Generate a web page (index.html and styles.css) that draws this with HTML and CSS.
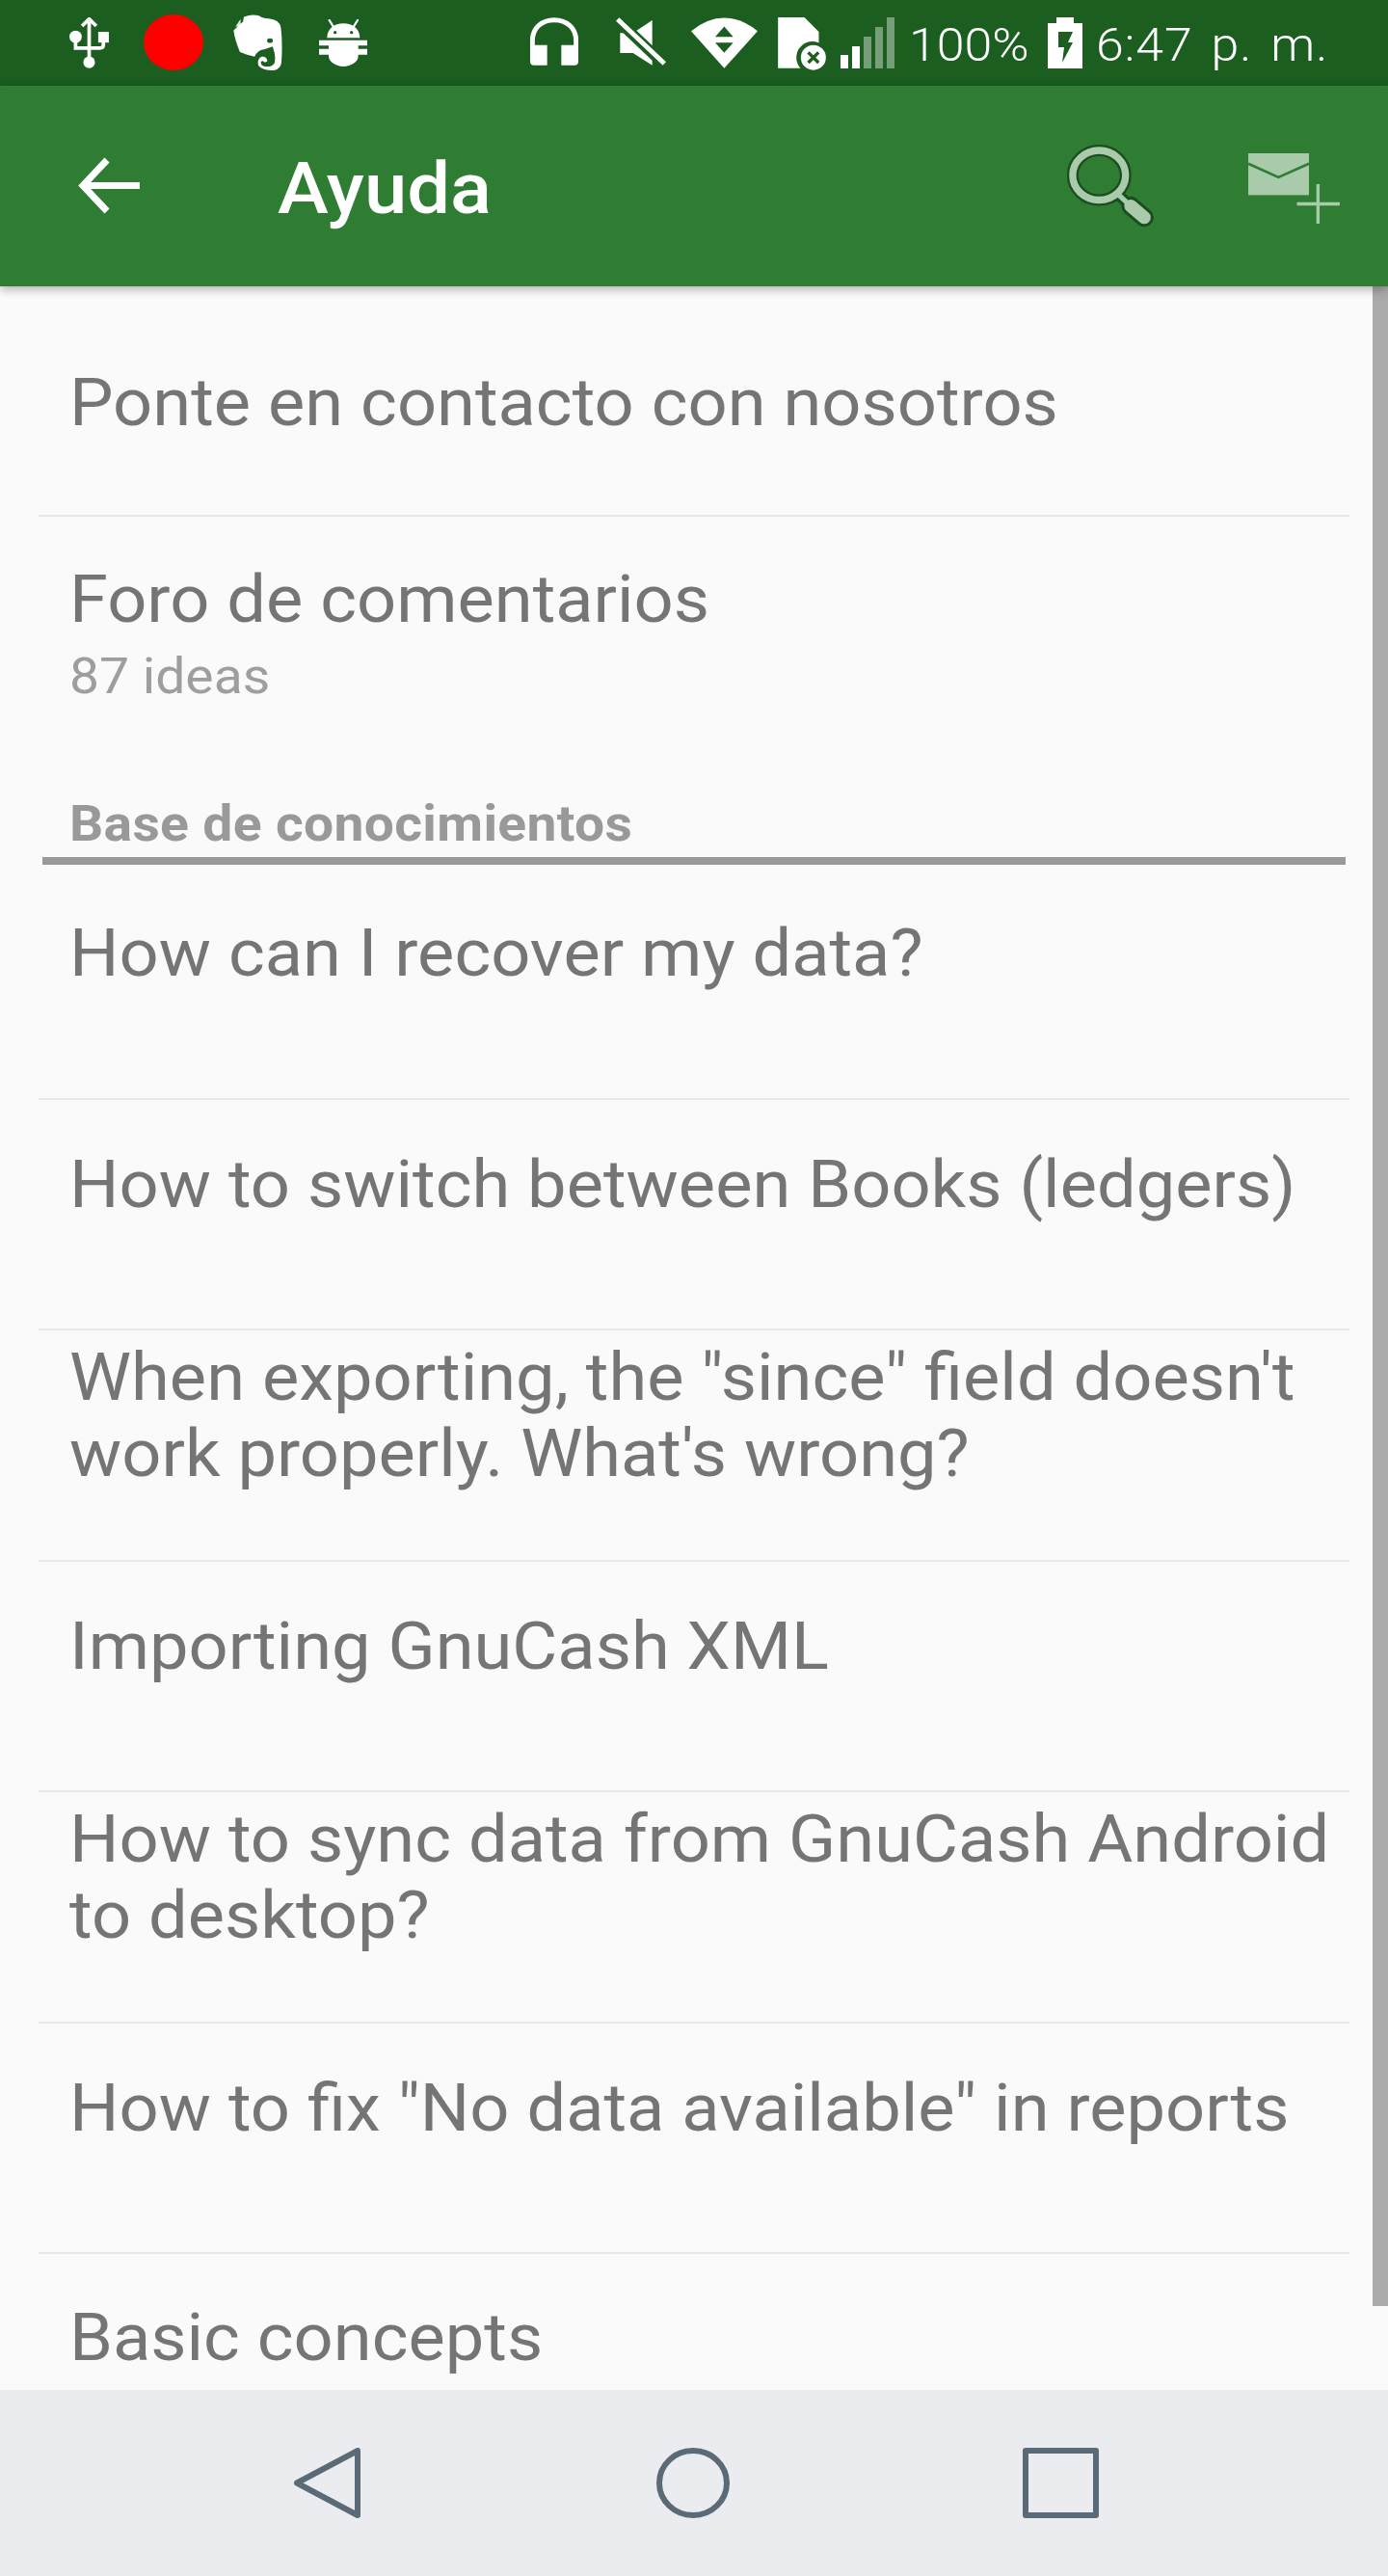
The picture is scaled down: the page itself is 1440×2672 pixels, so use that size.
FILE: index.html
```html
<!DOCTYPE html>
<html lang="es">
<head>
  <meta charset="UTF-8" />
  <meta name="viewport" content="width=device-width, initial-scale=1.0" />
  <title>Ayuda</title>
  <link rel="stylesheet" href="styles.css">
</head>
<body>
  <div class="phone">
    <div class="status-bar">
      <svg class="ic ic-usb" viewBox="36 40 122 158">
        <path d="M97 50V178M75 67L97 45L119 67" class="usb-line" />
        <path d="M55 100V135H97M141 100V125Q141 135 130 135H97" class="usb-line" />
        <circle cx="97" cy="179" r="18" fill="#fff" />
        <circle cx="55" cy="100" r="19" fill="#fff" />
        <rect x="125" y="85" width="33" height="33" fill="#fff" />
      </svg>
      <div class="rec-dot"></div>
      <svg class="ic ic-evernote" viewBox="0 0 152 175">
        <path fill="#fff" fill-rule="evenodd" d="M0 50L30 22L32 8Q55 -3 80 4Q88 12 110 13Q143 16 148 40Q154 85 150 150Q147 172 125 175Q90 176 78 160Q72 140 88 132Q104 130 106 146L98 150Q92 142 86 148Q84 158 95 162Q120 166 128 152Q134 128 122 100Q100 108 85 112Q72 118 66 132Q45 128 20 118Q4 80 0 50ZM105 82a9 7 0 1 0 18 0a9 7 0 1 0 -18 0Z" />
        <path fill="#fff" d="M6 38L22 14V38Z" opacity=".85" />
      </svg>
      <svg class="ic ic-android" viewBox="813 45 150 147">
        <path fill="#fff" fill-rule="evenodd" d="M838 103C838 75 860 58 889 58C918 58 940 75 940 103ZM858 86a5 5 0 1 0 10 0a5 5 0 1 0 -10 0ZM909 86a5 5 0 1 0 10 0a5 5 0 1 0 -10 0Z" />
        <path d="M845 48L860 72M933 48L918 72" stroke="#fff" stroke-width="7" stroke-linecap="round" />
        <path fill="#fff" d="M813 110H963V127H935V137H963V155H935V160C935 178 912 192 889 192C866 192 843 178 843 160V155H813V137H843V127H813Z" />
      </svg>
      <svg class="ic ic-headphones" viewBox="30 40 150 148">
        <path fill="none" stroke="#fff" stroke-width="15" d="M37 135V112C37 72 66 47 105 47C144 47 173 72 173 112V135" />
        <path fill="#fff" d="M30 125H83V188H42Q30 188 30 176ZM127 125H180V176Q180 188 168 188H127Z" />
      </svg>
      <svg class="ic ic-mute" viewBox="297 40 156 148">
        <path fill="#fff" d="M310 88H350L410 48V188L350 150H310Z" />
        <path stroke="#1b5e20" stroke-width="34" d="M290 36L450 188" />
        <path stroke="#fff" stroke-width="15" d="M302 45L448 183" />
      </svg>
      <svg class="ic ic-wifi" viewBox="530 40 207 158">
        <path fill="#fff" d="M530 82Q633 0 737 82L633 198Z" />
        <path fill="#1b5e20" d="M633 68L605 100H661ZM605 118H661L633 150Z" />
      </svg>
      <svg class="ic ic-sim" viewBox="798 40 155 165">
        <path fill="#fff" d="M798 40H880L925 85V198H798Z" />
        <circle cx="905" cy="165" r="50" fill="#1b5e20" />
        <circle cx="908" cy="165" r="39" fill="#fff" />
        <path stroke="#1b5e20" stroke-width="10" d="M892 149L924 181M924 149L892 181" />
      </svg>
      <div class="signal">
        <span class="bar bar-1"></span>
        <span class="bar bar-2"></span>
        <span class="bar bar-3 off"></span>
        <span class="bar bar-4 off"></span>
        <span class="bar bar-5 off"></span>
      </div>
      <span class="status-text pct">100%</span>
      <svg class="ic ic-battery" viewBox="0 0 36 53">
        <path fill="#fff" d="M9 0H27V6H36V53H0V6H9Z" />
        <path fill="#1b5e20" d="M11 15H26L21 26H26L15 47L17 31H11Z" />
      </svg>
      <span class="status-text time">6:47 p. m.</span>
    </div>

    <header class="app-bar">
      <svg class="back" viewBox="0 0 65 59">
        <path d="M31 3L6 29.500L31 56M6 29.500H65" fill="none" stroke="#fff" stroke-width="7" />
      </svg>
      <h1 class="title"><span class="wide">Ayuda</span></h1>
      <svg class="search" viewBox="45 30 280 260">
        <g fill="none" stroke="#1b4d20" stroke-linecap="round">
          <ellipse cx="150" cy="125" rx="82" ry="77" stroke-width="36" />
          <path d="M215 190L245 218" stroke-width="34" />
          <path d="M248 220L290 256" stroke-width="58" />
        </g>
        <g fill="none" stroke="#a9cbac" stroke-linecap="round">
          <ellipse cx="150" cy="125" rx="82" ry="77" stroke-width="22" />
          <path d="M210 185L245 218" stroke-width="16" />
          <path d="M248 220L290 256" stroke-width="40" />
        </g>
      </svg>
      <svg class="compose" viewBox="618 58 282 217">
        <rect x="618" y="58" width="187" height="129" fill="#a9cbac" />
        <path d="M618 90L711 132L805 90" fill="none" stroke="#2e7d32" stroke-width="8" />
        <path d="M768 214H900M833 153V275" fill="none" stroke="#a9cbac" stroke-width="10" />
      </svg>
    </header>

    <main class="content">
      <div class="scrollbar"></div>
      <div class="row row-first"><span class="row-text wide">Ponte en contacto con nosotros</span></div>
      <div class="forum">
        <div class="forum-title"><span class="wide">Foro de comentarios</span></div>
        <div class="forum-sub"><span class="wide">87 ideas</span></div>
      </div>
      <div class="section"><span class="wide">Base de conocimientos</span></div>
      <div class="row row-top"><span class="row-text wide">How can I recover my data?</span></div>
      <div class="row"><span class="row-text wide">How to switch between Books (ledgers)</span></div>
      <div class="row"><span class="row-text wide">When exporting, the "since" field doesn't work properly. What's wrong?</span></div>
      <div class="row"><span class="row-text wide">Importing GnuCash XML</span></div>
      <div class="row"><span class="row-text wide">How to sync data from GnuCash Android to desktop?</span></div>
      <div class="row"><span class="row-text wide">How to fix "No data available" in reports</span></div>
      <div class="row row-last"><span class="row-text wide">Basic concepts</span></div>
    </main>

    <nav class="nav-bar">
      <svg class="nav-ic nav-back" viewBox="0 0 69 73">
        <path d="M66 3V70L3 36.500Z" />
      </svg>
      <svg class="nav-ic nav-home" viewBox="0 0 76 73">
        <ellipse cx="38" cy="36.500" rx="35" ry="33.500" />
      </svg>
      <svg class="nav-ic nav-recent" viewBox="0 0 79 73">
        <rect x="3" y="3" width="73" height="67" />
      </svg>
    </nav>
  </div>
</body>
</html>
```

FILE: styles.css
```css
* {
  box-sizing: border-box;
}
html, body {
  margin: 0;
  padding: 0;
}
body {
  font-family: Roboto, "Liberation Sans", sans-serif;
  background-color: #fafafa;
  color: #757575;
}
.phone {
  width: 1440px;
  height: 2672px;
  display: flex;
  flex-direction: column;
  overflow: hidden;
}
/* the screenshot is stretched a little sideways */
.wide {
  display: inline-block;
  transform: scaleX(1.062);
  transform-origin: left center;
}

/* status bar */
.status-bar {
  height: 89px;
  flex: none;
  display: flex;
  align-items: flex-start;
  background-color: #1b5e20;
  color: #fff;
}
.ic {
  flex: none;
  display: block;
}
.usb-line {
  fill: none;
  stroke: #fff;
  stroke-width: 11;
}
.ic-usb {
  width: 41px;
  height: 53px;
  margin: 18px 0 0 72px;
}
.rec-dot {
  width: 62px;
  height: 58px;
  margin: 15px 0 0 36px;
  border-radius: 50%;
  background-color: #ff0000;
}
.ic-evernote {
  width: 51px;
  height: 58px;
  margin: 15px 0 0 31px;
}
.ic-android {
  width: 50px;
  height: 49px;
  margin: 20px 0 0 38px;
}
.ic-headphones {
  width: 50px;
  height: 50px;
  margin: 18px 0 0 169px;
}
.ic-mute {
  width: 52px;
  height: 50px;
  margin: 18px 0 0 39px;
}
.ic-wifi {
  width: 69px;
  height: 53px;
  margin: 18px 0 0 26px;
}
.ic-sim {
  width: 52px;
  height: 55px;
  margin: 18px 0 0 21px;
}
.signal {
  flex: none;
  display: flex;
  align-items: flex-end;
  gap: 4px;
  width: 56px;
  height: 53px;
  margin: 18px 0 0 13px;
}
.bar {
  width: 8px;
  background-color: #fff;
}
.bar.off {
  opacity: 0.4;
}
.bar-1 { height: 14px; }
.bar-2 { height: 23px; }
.bar-3 { height: 33px; }
.bar-4 { height: 43px; }
.bar-5 { height: 53px; }
.status-text {
  flex: none;
  font-size: 48px;
  line-height: 93px;
  font-weight: 300;
  height: 89px;
  transform: scaleX(1.08);
  transform-origin: left center;
}
.pct {
  width: 125px;
  margin-left: 15px;
}
.ic-battery {
  width: 36px;
  height: 53px;
  margin: 18px 0 0 19px;
}
.time {
  margin-left: 14px;
  letter-spacing: 0.8px;
  word-spacing: 5px;
}

/* app bar */
.app-bar {
  position: relative;
  z-index: 2;
  height: 208px;
  flex: none;
  display: flex;
  align-items: flex-start;
  background-color: #2e7d32;
  box-shadow: 0 3px 10px rgba(0, 0, 0, 0.3);
}
.back {
  flex: none;
  width: 65px;
  height: 59px;
  margin: 74px 0 0 80px;
}
.title {
  margin: 0 0 0 143px;
  width: 817px;
  font-size: 75px;
  font-weight: 500;
  line-height: 213px;
  color: #fff;
}
.search {
  flex: none;
  width: 94px;
  height: 87px;
  margin-top: 61px;
}
.compose {
  flex: none;
  width: 95px;
  height: 73px;
  margin: 70px 0 0 96px;
}

/* list */
.content {
  position: relative;
  flex: 1;
  overflow: hidden;
  padding-right: 40px;
  padding-left: 40px;
  background-color: #fafafa;
}
.scrollbar {
  position: absolute;
  top: 0;
  right: 0;
  width: 16px;
  height: 2095px;
  background-color: #aaaaaa;
}
.row {
  display: flex;
  align-items: center;
  height: 239.400px;
  padding: 0 0 60px 32px;
  border-bottom: 2px solid #e8e8e8;
  font-size: 68px;
  line-height: 79px;
}
.row-text {
  flex: none;
  width: 1260px;
}
.row-first {
  height: 239px;
  padding: 6px 0 0 32px;
}
.row-top {
  height: 244px;
  padding-top: 2px;
}
.row-last {
  border-bottom: none;
  padding-bottom: 64px;
}
.forum {
  height: 289px;
  padding: 47px 0 0 32px;
}
.forum-title {
  font-size: 68px;
  line-height: 79px;
}
.forum-sub {
  font-size: 52px;
  line-height: 58px;
  margin-top: 11px;
  color: #9e9e9e;
}
.section {
  height: 72px;
  margin: 0 4px;
  padding: 0 0 0 28px;
  border-bottom: 8px solid #999999;
  font-size: 52px;
  font-weight: 700;
  letter-spacing: 0.3px;
  line-height: 60px;
  color: #999999;
}

/* nav bar */
.nav-bar {
  height: 193px;
  flex: none;
  display: flex;
  align-items: flex-start;
  padding-top: 60px;
  background-color: #eaecf0;
}
.nav-ic {
  flex: none;
  fill: none;
  stroke: #5a6a76;
  stroke-width: 6;
  stroke-linejoin: round;
  height: 73px;
}
.nav-back {
  width: 69px;
  margin-left: 305px;
}
.nav-home {
  width: 76px;
  margin-left: 307px;
}
.nav-recent {
  width: 79px;
  margin-left: 304px;
}
```
